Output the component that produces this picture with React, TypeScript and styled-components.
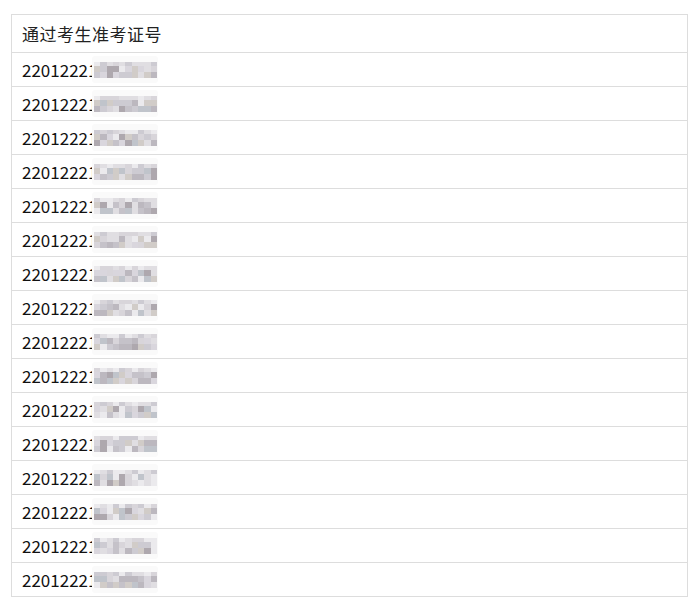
import { createGlobalStyle } from "styled-components";
import styled from "styled-components";

const GlobalStyle = createGlobalStyle`
  html, body {
    margin: 0;
    padding: 0;
    background: #ffffff;
  }
  body {
    font-family: "Noto Sans CJK SC", "Noto Sans", sans-serif;
    color: #222222;
  }
`;

const Page = styled.div`
  padding: 14px 10px 0 11px;
`;

const Table = styled.div`
  width: 677px;
  box-sizing: border-box;
  border: 1px solid #dddddd;
  border-bottom: none;
`;

const HeaderRow = styled.div`
  height: 37px;
  border-bottom: 1px solid #dddddd;
  display: flex;
  align-items: center;
  padding-left: 10px;
  font-size: 17px;
  letter-spacing: 0.5px;
  color: #222222;
`;

const Row = styled.div`
  position: relative;
  height: 33px;
  border-bottom: 1px solid #dddddd;
  display: flex;
  align-items: center;
  padding-left: 10px;
  font-size: 17px;
  color: #111111;
`;

const Halo = styled.div`
  position: absolute;
  left: 80px;
  top: 3px;
  width: 66px;
  height: 27px;
  background: #fafafa;
  border-radius: 3px;
`;

const Mosaic = styled.div`
  position: absolute;
  left: 82px;
  top: 9px;
  display: grid;
  grid-template-columns: repeat(10, 6.3px);
  grid-template-rows: 4px 6px 6px;
`;

const Tile = styled.div<{ $c: string }>`
  background: ${(p) => p.$c};
`;

const palette = [
  "#ebeaed",
  "#e0dee2",
  "#d8d5da",
  "#cdcbd2",
  "#c5c2c9",
  "#bcb8bf",
  "#aea8ae",
  "#d1ccc8",
  "#d9d6dd",
  "#c0c4cb",
];

function tiles(seed: number): string[] {
  let s = seed * 9301 + 49297;
  const out: string[] = [];
  for (let i = 0; i < 30; i++) {
    s = (s * 9301 + 49297) % 233280;
    const r = s / 233280;
    // the top strip of the blur is paler than the rest
    const idx = i < 10 ? Math.floor(r * 4) : Math.floor(r * palette.length);
    out.push(palette[idx]);
  }
  return out;
}

const rows = Array.from({ length: 16 }, (_, i) => i);

export default function App() {
  return (
    <>
      <GlobalStyle />
      <Page>
        <Table>
          <HeaderRow>通过考生准考证号</HeaderRow>
          {rows.map((i) => (
            <Row key={i}>
              22012221
              <Halo />
              <Mosaic>
                {tiles(i + 3).map((c, j) => (
                  <Tile key={j} $c={c} />
                ))}
              </Mosaic>
            </Row>
          ))}
        </Table>
      </Page>
    </>
  );
}
